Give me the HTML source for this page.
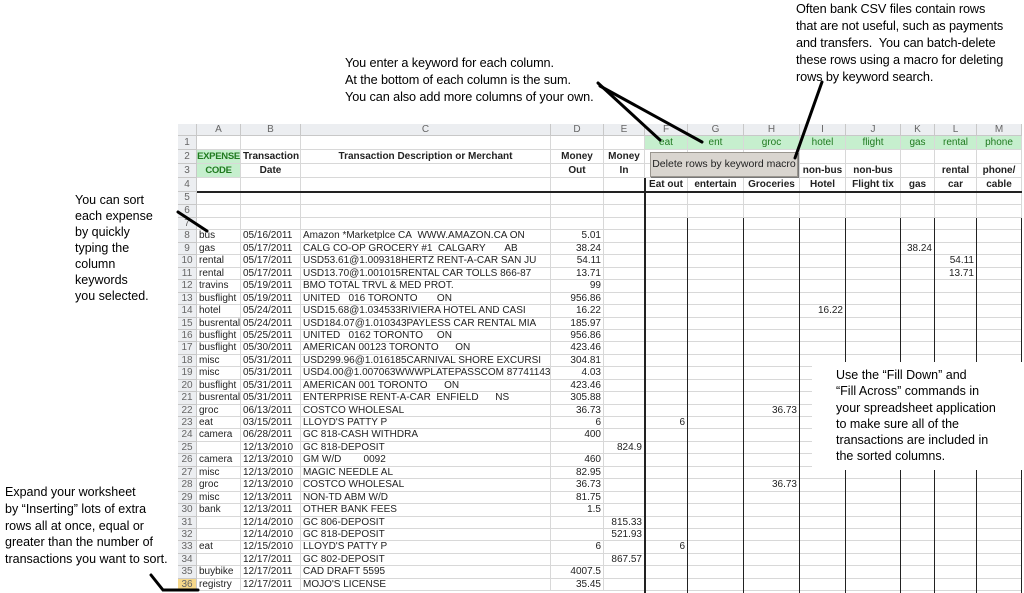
<!DOCTYPE html>
<html><head><meta charset="utf-8"><style>
body{margin:0;width:1024px;height:593px;overflow:hidden;background:#fff;position:relative;font-family:"Liberation Sans",Arial,sans-serif}
#s{position:absolute;left:178px;top:124px;width:844px;font-size:10px;color:#222}
.w{display:grid;grid-template-columns:19px 44px 60px 250px 53px 41px 43px 56px 56px 46px 55px 34px 42px 45px;height:12.45px}
.w span{box-sizing:border-box;border-right:1px solid #d8d8d8;border-bottom:1px solid #d8d8d8;padding:0 2px;white-space:nowrap;overflow:hidden;line-height:11.5px}
.w span:first-child{background:#eceef1;color:#666;text-align:center;padding:0;border-color:#c8c8c8}
.hd{height:12px}.hd span{background:#eceef1;color:#666;text-align:center;border-color:#c8c8c8}
.t{height:14px}.t span{line-height:13px}
.m{height:13px}
.r{text-align:right}
.g{background:#c6efce;color:#1f7a1f;text-align:center}
.w span.gb{background:#c6efce;color:#1f7a1f;font-weight:bold;text-align:center;padding:0;font-size:9.5px;letter-spacing:-0.3px}
.b{font-weight:bold;text-align:center}
.ln{position:absolute;background:#222}
.nt{position:absolute;font-size:12.5px;line-height:16.5px;color:#000}
.nr{font-size:12.7px;line-height:17px;letter-spacing:-0.1px}
</style></head><body>
<div id="s">
<div class="w hd"><span></span><span>A</span><span>B</span><span>C</span><span>D</span><span>E</span><span>F</span><span>G</span><span>H</span><span>I</span><span>J</span><span>K</span><span>L</span><span>M</span></div>
<div class="w t"><span>1</span><span></span><span></span><span></span><span></span><span></span><span class="g">eat</span><span class="g">ent</span><span class="g">groc</span><span class="g">hotel</span><span class="g">flight</span><span class="g">gas</span><span class="g">rental</span><span class="g">phone</span></div>
<div class="w t"><span>2</span><span class="gb">EXPENSE</span><span class="b">Transaction</span><span class="b">Transaction Description or Merchant</span><span class="b">Money</span><span class="b">Money</span><span></span><span></span><span></span><span></span><span></span><span></span><span></span><span></span></div>
<div class="w t"><span>3</span><span class="gb">CODE</span><span class="b">Date</span><span></span><span class="b">Out</span><span class="b">In</span><span></span><span></span><span></span><span class="b">non-bus</span><span class="b">non-bus</span><span></span><span class="b">rental</span><span class="b">phone/</span></div>
<div class="w t"><span>4</span><span></span><span></span><span></span><span></span><span></span><span class="b">Eat out</span><span class="b">entertain</span><span class="b">Groceries</span><span class="b">Hotel</span><span class="b">Flight tix</span><span class="b">gas</span><span class="b">car</span><span class="b">cable</span></div>
<div class="w m"><span>5</span><span></span><span></span><span></span><span></span><span></span><span></span><span></span><span></span><span></span><span></span><span></span><span></span><span></span></div>
<div class="w m"><span>6</span><span></span><span></span><span></span><span></span><span></span><span></span><span></span><span></span><span></span><span></span><span></span><span></span><span></span></div>
<div class="w"><span>7</span><span></span><span></span><span></span><span></span><span></span><span></span><span></span><span></span><span></span><span></span><span></span><span></span><span></span></div>
<div class="w"><span>8</span><span>bus</span><span>05/16/2011</span><span>Amazon *Marketplce CA&nbsp; WWW.AMAZON.CA ON</span><span class="r">5.01</span><span></span><span></span><span></span><span></span><span></span><span></span><span></span><span></span><span></span></div>
<div class="w"><span>9</span><span>gas</span><span>05/17/2011</span><span>CALG CO-OP GROCERY #1&nbsp; CALGARY &nbsp; &nbsp; &nbsp; AB</span><span class="r">38.24</span><span></span><span></span><span></span><span></span><span></span><span></span><span class="r">38.24</span><span></span><span></span></div>
<div class="w"><span>10</span><span>rental</span><span>05/17/2011</span><span>USD53.61@1.009318HERTZ RENT-A-CAR SAN JU</span><span class="r">54.11</span><span></span><span></span><span></span><span></span><span></span><span></span><span></span><span class="r">54.11</span><span></span></div>
<div class="w"><span>11</span><span>rental</span><span>05/17/2011</span><span>USD13.70@1.001015RENTAL CAR TOLLS 866-87</span><span class="r">13.71</span><span></span><span></span><span></span><span></span><span></span><span></span><span></span><span class="r">13.71</span><span></span></div>
<div class="w"><span>12</span><span>travins</span><span>05/19/2011</span><span>BMO TOTAL TRVL &amp; MED PROT.</span><span class="r">99</span><span></span><span></span><span></span><span></span><span></span><span></span><span></span><span></span><span></span></div>
<div class="w"><span>13</span><span>busflight</span><span>05/19/2011</span><span>UNITED &nbsp; 016 TORONTO &nbsp; &nbsp; &nbsp; ON</span><span class="r">956.86</span><span></span><span></span><span></span><span></span><span></span><span></span><span></span><span></span><span></span></div>
<div class="w"><span>14</span><span>hotel</span><span>05/24/2011</span><span>USD15.68@1.034533RIVIERA HOTEL AND CASI</span><span class="r">16.22</span><span></span><span></span><span></span><span></span><span class="r">16.22</span><span></span><span></span><span></span><span></span></div>
<div class="w"><span>15</span><span>busrental</span><span>05/24/2011</span><span>USD184.07@1.010343PAYLESS CAR RENTAL MIA</span><span class="r">185.97</span><span></span><span></span><span></span><span></span><span></span><span></span><span></span><span></span><span></span></div>
<div class="w"><span>16</span><span>busflight</span><span>05/25/2011</span><span>UNITED &nbsp; 0162 TORONTO &nbsp; &nbsp; ON</span><span class="r">956.86</span><span></span><span></span><span></span><span></span><span></span><span></span><span></span><span></span><span></span></div>
<div class="w"><span>17</span><span>busflight</span><span>05/30/2011</span><span>AMERICAN 00123 TORONTO &nbsp; &nbsp; &nbsp;ON</span><span class="r">423.46</span><span></span><span></span><span></span><span></span><span></span><span></span><span></span><span></span><span></span></div>
<div class="w"><span>18</span><span>misc</span><span>05/31/2011</span><span>USD299.96@1.016185CARNIVAL SHORE EXCURSI</span><span class="r">304.81</span><span></span><span></span><span></span><span></span><span></span><span></span><span></span><span></span><span></span></div>
<div class="w"><span>19</span><span>misc</span><span>05/31/2011</span><span>USD4.00@1.007063WWWPLATEPASSCOM 87741143</span><span class="r">4.03</span><span></span><span></span><span></span><span></span><span></span><span></span><span></span><span></span><span></span></div>
<div class="w"><span>20</span><span>busflight</span><span>05/31/2011</span><span>AMERICAN 001 TORONTO &nbsp; &nbsp; &nbsp;ON</span><span class="r">423.46</span><span></span><span></span><span></span><span></span><span></span><span></span><span></span><span></span><span></span></div>
<div class="w"><span>21</span><span>busrental</span><span>05/31/2011</span><span>ENTERPRISE RENT-A-CAR&nbsp; ENFIELD &nbsp; &nbsp; &nbsp;NS</span><span class="r">305.88</span><span></span><span></span><span></span><span></span><span></span><span></span><span></span><span></span><span></span></div>
<div class="w"><span>22</span><span>groc</span><span>06/13/2011</span><span>COSTCO WHOLESAL</span><span class="r">36.73</span><span></span><span></span><span></span><span class="r">36.73</span><span></span><span></span><span></span><span></span><span></span></div>
<div class="w"><span>23</span><span>eat</span><span>03/15/2011</span><span>LLOYD'S PATTY P</span><span class="r">6</span><span></span><span class="r">6</span><span></span><span></span><span></span><span></span><span></span><span></span><span></span></div>
<div class="w"><span>24</span><span>camera</span><span>06/28/2011</span><span>GC 818-CASH WITHDRA</span><span class="r">400</span><span></span><span></span><span></span><span></span><span></span><span></span><span></span><span></span><span></span></div>
<div class="w"><span>25</span><span></span><span>12/13/2010</span><span>GC 818-DEPOSIT</span><span></span><span class="r">824.9</span><span></span><span></span><span></span><span></span><span></span><span></span><span></span><span></span></div>
<div class="w"><span>26</span><span>camera</span><span>12/13/2010</span><span>GM W/D &nbsp; &nbsp; &nbsp; &nbsp;0092</span><span class="r">460</span><span></span><span></span><span></span><span></span><span></span><span></span><span></span><span></span><span></span></div>
<div class="w"><span>27</span><span>misc</span><span>12/13/2010</span><span>MAGIC NEEDLE AL</span><span class="r">82.95</span><span></span><span></span><span></span><span></span><span></span><span></span><span></span><span></span><span></span></div>
<div class="w"><span>28</span><span>groc</span><span>12/13/2010</span><span>COSTCO WHOLESAL</span><span class="r">36.73</span><span></span><span></span><span></span><span class="r">36.73</span><span></span><span></span><span></span><span></span><span></span></div>
<div class="w"><span>29</span><span>misc</span><span>12/13/2011</span><span>NON-TD ABM W/D</span><span class="r">81.75</span><span></span><span></span><span></span><span></span><span></span><span></span><span></span><span></span><span></span></div>
<div class="w"><span>30</span><span>bank</span><span>12/13/2011</span><span>OTHER BANK FEES</span><span class="r">1.5</span><span></span><span></span><span></span><span></span><span></span><span></span><span></span><span></span><span></span></div>
<div class="w"><span>31</span><span></span><span>12/14/2010</span><span>GC 806-DEPOSIT</span><span></span><span class="r">815.33</span><span></span><span></span><span></span><span></span><span></span><span></span><span></span><span></span></div>
<div class="w"><span>32</span><span></span><span>12/14/2010</span><span>GC 818-DEPOSIT</span><span></span><span class="r">521.93</span><span></span><span></span><span></span><span></span><span></span><span></span><span></span><span></span></div>
<div class="w"><span>33</span><span>eat</span><span>12/15/2010</span><span>LLOYD'S PATTY P</span><span class="r">6</span><span></span><span class="r">6</span><span></span><span></span><span></span><span></span><span></span><span></span><span></span></div>
<div class="w"><span>34</span><span></span><span>12/17/2011</span><span>GC 802-DEPOSIT</span><span></span><span class="r">867.57</span><span></span><span></span><span></span><span></span><span></span><span></span><span></span><span></span></div>
<div class="w"><span>35</span><span>buybike</span><span>12/17/2011</span><span>CAD DRAFT 5595</span><span class="r">4007.5</span><span></span><span></span><span></span><span></span><span></span><span></span><span></span><span></span><span></span></div>
<div class="w"><span style="background:#f6d88a">36</span><span>registry</span><span>12/17/2011</span><span>MOJO'S LICENSE</span><span class="r">35.45</span><span></span><span></span><span></span><span></span><span></span><span></span><span></span><span></span><span></span></div>
</div>

<div class="ln" style="left:197px;top:191px;width:825px;height:2px"></div>
<div class="ln" style="left:644px;top:178px;width:2px;height:415px"></div>
<div class="ln" style="left:687px;top:218px;width:1px;height:375px"></div>
<div class="ln" style="left:743px;top:218px;width:1px;height:375px"></div>
<div class="ln" style="left:799px;top:218px;width:1px;height:375px"></div>
<div class="ln" style="left:845px;top:218px;width:1px;height:375px"></div>
<div class="ln" style="left:900px;top:218px;width:1px;height:375px"></div>
<div class="ln" style="left:934px;top:218px;width:1px;height:375px"></div>
<div class="ln" style="left:976px;top:218px;width:1px;height:375px"></div>
<div class="ln" style="left:1021px;top:218px;width:1px;height:375px"></div>

<div style="position:absolute;left:650px;top:152px;width:146px;height:23px;background:#d9d5cf;border:1px solid #9a968f;box-shadow:1px 1px 0 #777;font-size:10.5px;line-height:23px;text-align:center;color:#222">Delete rows by keyword macro</div>

<div style="position:absolute;left:812px;top:362px;width:212px;height:108px;background:#fff"></div>

<div class="nt nr" style="left:345px;top:55px">You enter a keyword for each column.<br>At the bottom of each column is the sum.<br>You can also add more columns of your own.</div>
<div class="nt nr" style="left:796px;top:1px">Often bank CSV files contain rows<br>that are not useful, such as payments<br>and transfers.&nbsp; You can batch-delete<br>these rows using a macro for deleting<br>rows by keyword search.</div>
<div class="nt" style="left:75px;top:192px;line-height:16px">You can sort<br>each expense<br>by quickly<br>typing the<br>column<br>keywords<br>you selected.</div>
<div class="nt" style="left:836px;top:367px;line-height:16.3px">Use the “Fill Down” and<br>“Fill Across” commands in<br>your spreadsheet application<br>to make sure all of the<br>transactions are included in<br>the sorted columns.</div>
<div class="nt" style="left:5px;top:484px;line-height:16.8px">Expand your worksheet<br>by “Inserting” lots of extra<br>rows all at once, equal or<br>greater than the number of<br>transactions you want to sort.</div>

<svg width="1024" height="593" style="position:absolute;left:0;top:0" fill="none" stroke="#000" stroke-width="3" stroke-linecap="round">
<path d="M598 83 L660 140"/><path d="M600 86 L702 142"/>
<path d="M822 82 L795 158"/>
<path d="M178 212 L207 231"/>
<path d="M151 575 L163 590 L198 590"/>
</svg>
</body></html>
